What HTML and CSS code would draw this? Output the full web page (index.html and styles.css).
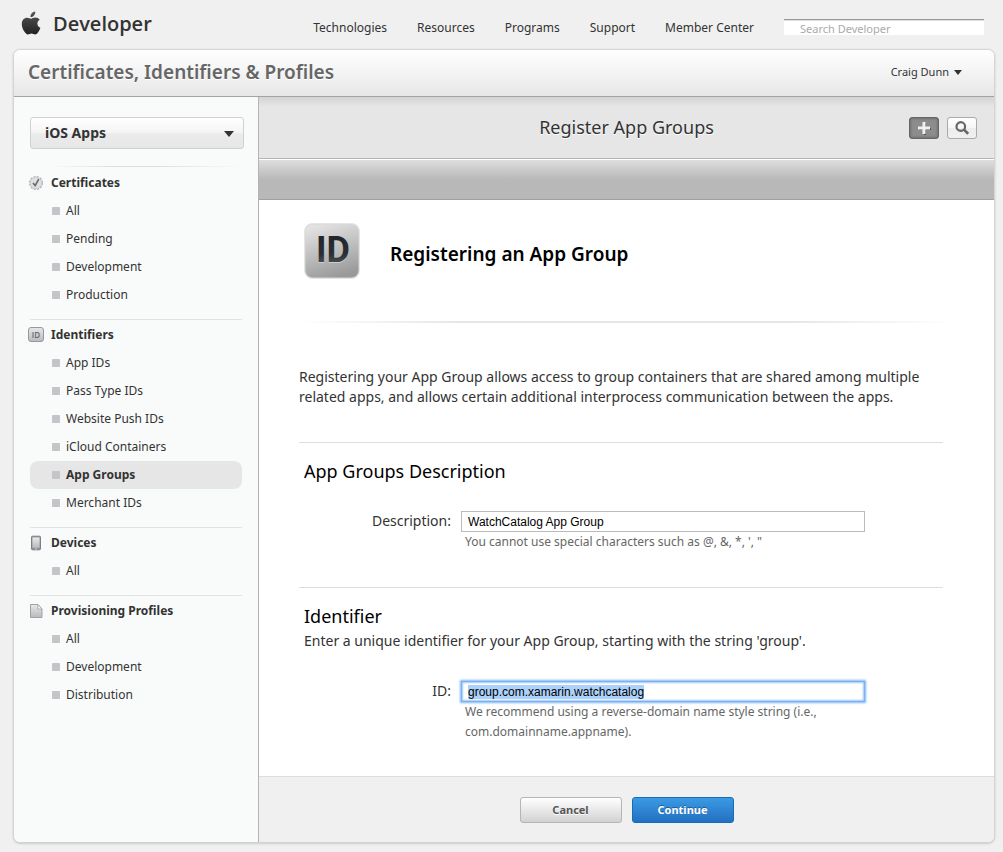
FILE: index.html
```html
<!DOCTYPE html>
<html lang="en">
<head>
<meta charset="utf-8">
<meta name="viewport" content="width=device-width, initial-scale=1">
<title>Register App Groups - Developer</title>
<link rel="stylesheet" href="styles.css">
</head>
<body>
<header class="site-header">
  <a class="brand" href="#">
    <svg class="brand-mark" viewBox="0 0 20 24" width="20" height="24" aria-hidden="true">
      <defs><linearGradient id="mark" x1="0" y1="0" x2="0" y2="1"><stop offset="0" stop-color="#555"/><stop offset="1" stop-color="#222"/></linearGradient></defs>
      <path fill="url(#mark)" d="M14.3 0.6c.2 1.500-.4 2.900-1.300 3.900-.9 1-2.200 1.700-3.500 1.600-.2-1.400.5-2.900 1.300-3.800C11.700 1.300 13.100.7 14.300.6zM18.700 8.700c-1.500.9-2.300 2.200-2.300 3.900 0 2 1.200 3.600 3 4.300-.5 1.500-1.200 2.800-2.100 4-.9 1.300-1.800 2.500-3.200 2.500s-1.900-.8-3.600-.8-2.200.8-3.600.8c-1.300 0-2.400-1.200-3.400-2.600C1.800 18.500.8 15.600.8 12.900c0-4 2.600-6.200 5.200-6.200 1.700 0 3 1 4 1s2.500-1.100 4.400-1.100c1.700 0 3.300.8 4.300 2.100z"/>
    </svg>
    <span>Developer</span>
  </a>
  <nav class="site-nav" aria-label="Site">
    <a href="#">Technologies</a>
    <a href="#">Resources</a>
    <a href="#">Programs</a>
    <a href="#">Support</a>
    <a href="#">Member Center</a>
  </nav>
  <input class="site-search" type="search" placeholder="Search Developer" aria-label="Search Developer">
</header>

<div class="panel">
  <div class="titlebar">
    <h1>Certificates, Identifiers &amp; Profiles</h1>
    <button class="account" type="button">Craig Dunn
      <svg viewBox="0 0 8 5" width="8" height="5" aria-hidden="true"><path fill="#333" d="M0 0h8L4 5z"/></svg>
    </button>
  </div>

  <div class="columns">
    <aside class="sidebar">
      <div class="platform">
        <select aria-label="Platform"><option>iOS Apps</option></select>
        <svg viewBox="0 0 10 6" width="10" height="6" aria-hidden="true"><path fill="#333" d="M0 0h10L5 6z"/></svg>
      </div>

      <section class="group group-first">
        <h2>
          <svg viewBox="0 0 16 16" width="16" height="16" aria-hidden="true">
            <circle cx="8" cy="8" r="6.300" fill="#d6d7d9" stroke="#b4b5b8" stroke-width="1.600" stroke-dasharray="2 1.300"/>
            <circle cx="8" cy="8" r="5.700" fill="#dfe0e1" stroke="#c6c7c9" stroke-width=".6"/>
            <path d="M5 8l2.200 2.600 3.500-6.400" fill="none" stroke="#66686c" stroke-width="1.600"/>
          </svg>
          Certificates
        </h2>
        <ul>
          <li><a href="#">All</a></li>
          <li><a href="#">Pending</a></li>
          <li><a href="#">Development</a></li>
          <li><a href="#">Production</a></li>
        </ul>
      </section>

      <section class="group">
        <h2>
          <svg viewBox="0 0 16 16" width="16" height="16" aria-hidden="true">
            <defs><linearGradient id="chip" x1="0" y1="0" x2="0" y2="1"><stop offset="0" stop-color="#e8e8ea"/><stop offset="1" stop-color="#b9babd"/></linearGradient></defs>
            <rect x=".5" y=".5" width="15" height="14" rx="2.500" fill="url(#chip)" stroke="#98999d"/>
            <text x="8" y="11" class="chip-text" text-anchor="middle">ID</text>
          </svg>
          Identifiers
        </h2>
        <ul>
          <li><a href="#">App IDs</a></li>
          <li><a href="#">Pass Type IDs</a></li>
          <li><a href="#">Website Push IDs</a></li>
          <li><a href="#">iCloud Containers</a></li>
          <li><a class="current" href="#" aria-current="page">App Groups</a></li>
          <li><a href="#">Merchant IDs</a></li>
        </ul>
      </section>

      <section class="group">
        <h2>
          <svg viewBox="0 0 16 16" width="16" height="16" aria-hidden="true">
            <rect x="3.500" y="1.200" width="9" height="13.600" rx="1" fill="#8d8f95" stroke="#7d7f85"/>
            <rect x="4.400" y="2.400" width="7.200" height="10.400" fill="url(#chip)"/>
            <path d="M7 14h2" stroke="#ddd" stroke-width=".8"/>
          </svg>
          Devices
        </h2>
        <ul>
          <li><a href="#">All</a></li>
        </ul>
      </section>

      <section class="group">
        <h2>
          <svg viewBox="0 0 16 16" width="16" height="16" aria-hidden="true">
            <path d="M2.500 1.500h7.500l4 4.500v8.500H2.500z" fill="url(#chip)" stroke="#a0a1a5"/>
            <path d="M9.800 1.500v4.500h4.200z" fill="#fafafa" stroke="#a0a1a5" stroke-width=".8"/>
          </svg>
          Provisioning Profiles
        </h2>
        <ul>
          <li><a href="#">All</a></li>
          <li><a href="#">Development</a></li>
          <li><a href="#">Distribution</a></li>
        </ul>
      </section>
    </aside>

    <main class="main">
      <div class="toolbar">
        <h2>Register App Groups</h2>
        <div class="tools">
          <button class="tool tool-on" type="button" aria-label="Add">
            <svg viewBox="0 0 14 14" width="14" height="14" aria-hidden="true"><path d="M8 2v12M2 8h12" stroke="#555" stroke-width="2"/><path d="M7 1v12M1 7h12" stroke="#f2f2f2" stroke-width="3"/></svg>
          </button>
          <button class="tool" type="button" aria-label="Search">
            <svg viewBox="0 0 14 14" width="14" height="14" aria-hidden="true"><circle cx="5.800" cy="5.500" r="4.300" fill="none" stroke="#666" stroke-width="2.200"/><path d="M8.700 8.400l4.500 4.500" stroke="#666" stroke-width="2.600"/></svg>
          </button>
        </div>
      </div>
      <div class="band"></div>

      <form class="form" onsubmit="return false">
        <div class="content">
          <div class="hero">
            <svg viewBox="0 0 56 56" width="56" height="56" aria-hidden="true">
              <defs>
                <linearGradient id="tile" x1=".3" y1="0" x2=".6" y2="1"><stop offset="0" stop-color="#e2e2e2"/><stop offset="1" stop-color="#999"/></linearGradient>
                <linearGradient id="ink" x1="0" y1="0" x2="0" y2="1"><stop offset="0" stop-color="#1f2327"/><stop offset=".6" stop-color="#2b2f33"/><stop offset="1" stop-color="#666a6e"/></linearGradient>
              </defs>
              <rect x=".5" y=".5" width="55" height="55" rx="8" fill="#d8d8d8" stroke="#e4e4e4"/>
              <rect x="1.500" y="1.500" width="53" height="53" rx="7" fill="url(#tile)"/>
              <text x="29" y="40" class="tile-text tile-shine" text-anchor="middle">ID</text>
              <text x="29" y="39" class="tile-text" fill="url(#ink)" text-anchor="middle">ID</text>
            </svg>
            <h3>Registering an App Group</h3>
          </div>
          <p class="intro">Registering your App Group allows access to group containers that are shared among multiple related apps, and allows certain additional interprocess communication between the apps.</p>

          <section class="block">
            <h4>App Groups Description</h4>
            <div class="field">
              <label for="description">Description:</label>
              <div class="control">
                <input id="description" type="text" value="WatchCatalog App Group" aria-describedby="description-help">
                <p id="description-help">You cannot use special characters such as @, &amp;, *, ', "</p>
              </div>
            </div>
          </section>

          <section class="block">
            <h4>Identifier</h4>
            <p class="lead">Enter a unique identifier for your App Group, starting with the string 'group'.</p>
            <div class="field">
              <label for="identifier">ID:</label>
              <div class="control">
                <input id="identifier" class="focused" type="text" value="group.com.xamarin.watchcatalog" aria-describedby="identifier-help" autofocus>
                <p id="identifier-help">We recommend using a reverse-domain name style string (i.e., com.domainname.appname).</p>
              </div>
            </div>
          </section>
        </div>
        <div class="actions">
          <button class="button" type="button">Cancel</button>
          <button class="button button-primary" type="submit">Continue</button>
        </div>
      </form>
    </main>
  </div>
</div>
<script src="main.js"></script>
</body>
</html>
```
FILE: styles.css
```css
* { box-sizing: border-box; }

body {
  margin: 0;
  padding: 0 9px 9px 14px;
  background: #f0f0f0;
  color: #333;
  font: 12px/20px "Noto Sans", "Open Sans", sans-serif;
}

h1, h2, h3, h4, p, ul { margin: 0; padding: 0; }
ul { list-style: none; }
a { color: inherit; text-decoration: none; }
button, input, select { font: inherit; color: inherit; margin: 0; }
svg { display: block; flex: none; }

.site-header {
  display: flex;
  align-items: center;
  height: 50px;
  padding: 4px 10px 0 7px;
}

.brand {
  display: flex;
  align-items: center;
  gap: 12px;
  margin-right: auto;
  padding-bottom: 8px;
  font: 600 20px/28px "Open Sans", sans-serif;
}

.brand span { padding-top: 2px; }

.site-nav {
  display: flex;
  gap: 30px;
  margin-right: 30px;
  padding-top: 2px;
}

.site-search {
  width: 200px;
  height: 16px;
  padding: 2px 16px 0;
  border: 0;
  border-top: 1px solid #999;
  border-radius: 0;
  outline: 0;
  background: #fff;
  box-shadow: inset 0 1px 0 #ddd;
  font-size: 11px;
  line-height: 14px;
  appearance: none;
}

.site-search::placeholder { color: #aaa; opacity: 1; }

.panel {
  border-radius: 6px;
  background: #fff;
  box-shadow: 0 0 1px 1px #d4d4d4, 0 1px 3px #aaa;
}

.titlebar {
  display: flex;
  align-items: center;
  justify-content: space-between;
  height: 47px;
  padding: 0 32px 2px 14px;
  border-bottom: 1px solid #a3a3a3;
  border-radius: 6px 6px 0 0;
  background: linear-gradient(#fff, #e7e7e7);
}

.titlebar h1 {
  color: #666;
  font-size: 19px;
  font-weight: 600;
  line-height: 24px;
  text-shadow: 0 1px 0 #fff;
}

.account {
  display: flex;
  align-items: center;
  gap: 5px;
  padding: 0;
  border: 0;
  background: none;
  font-size: 11px;
}

.columns { display: flex; }

.sidebar {
  flex: none;
  width: 245px;
  padding: 20px 14px 0 16px;
  border-right: 1px solid #b4b4b4;
  border-radius: 0 0 0 6px;
  background: #f9fbfa;
}

.platform { position: relative; }

.platform select {
  display: block;
  width: 100%;
  height: 32px;
  padding: 0 30px 0 14px;
  border: 1px solid #d0d0d0;
  border-radius: 3px;
  background: linear-gradient(#fff, #f4f4f4 50%, #ececec 50%, #e6e6e6);
  font-size: 14px;
  font-weight: 700;
  appearance: none;
}

.platform svg {
  position: absolute;
  top: 14px;
  right: 10px;
  pointer-events: none;
}

.group {
  margin: 10px 2px 0 0;
  border-top: 1px solid #e0e2e1;
}

.group-first {
  margin-top: 17px;
  border-image: linear-gradient(90deg, transparent 10%, #ddd 40%, #ddd 60%, transparent) 1;
}

.group h2 {
  display: flex;
  align-items: center;
  gap: 7px;
  height: 30px;
  padding-top: 1px;
  margin-left: -2px;
  font-size: 12px;
  font-weight: 700;
}

.group + .group h2 {
  height: 29px;
}

.chip-text {
  fill: #66686c;
  font: 600 8px "Open Sans", sans-serif;
}

.group a {
  display: flex;
  align-items: center;
  gap: 6px;
  height: 28px;
  padding-left: 22px;
  border-radius: 8px;
}

.group a::before {
  content: "";
  width: 8px;
  height: 8px;
  border-radius: 1px;
  background: #c4c5c8;
}

.group .current {
  background: #e6e6e6;
  font-weight: 700;
}

.main {
  flex: 1;
  min-width: 0;
}

.toolbar {
  display: grid;
  grid-template-columns: 1fr auto 1fr;
  align-items: center;
  height: 62px;
  padding: 0 17px;
  border-bottom: 1px solid #b5b5b5;
  background: linear-gradient(#d4d4d4, #e6e6e6 10px);
}

.toolbar h2 {
  grid-column: 2;
  padding-bottom: 2px;
  font-size: 18px;
  font-weight: 400;
  line-height: 24px;
  text-shadow: 0 1px 0 #fff;
}

.tools {
  display: flex;
  justify-content: flex-end;
  gap: 8px;
}

.tool {
  display: grid;
  place-items: center;
  width: 30px;
  height: 22px;
  padding: 0;
  border: 1px solid #aaa;
  border-radius: 3px;
  background: linear-gradient(#fff, #f6f6f6 50%, #ececec 50%, #f0f0f0);
}

.tool-on {
  border-color: #666;
  background: #8c8c8c;
  box-shadow: inset 0 0 3px #555;
}

.band {
  height: 41px;
  border-top: 1px solid #fff;
  border-bottom: 1px solid #a0a0a0;
  background: linear-gradient(#dedede, #b8b8b8 50%);
}

.content { padding: 23px 51px 34px 40px; }

.hero {
  display: flex;
  align-items: center;
  gap: 30px;
  margin-right: -10px;
  padding: 0 5px 42px;
  border-bottom: 2px solid;
  border-image: linear-gradient(90deg, transparent, #e6e6e6 25%, #e6e6e6 75%, transparent) 1;
}

.hero h3 {
  padding-top: 6px;
  color: #000;
  font-size: 19px;
  font-weight: 600;
  line-height: 24px;
}

.tile-text {
  font: 700 36px Roboto, sans-serif;
}

.tile-shine { fill: #ccc; }

.intro {
  margin: 44px 0 35px;
  font-size: 14px;
}

.block {
  padding-top: 15px;
  border-top: 1px solid #ddd;
}

.block + .block { margin-top: 35px; }

.block h4 {
  padding-left: 5px;
  color: #000;
  font-size: 18px;
  font-weight: 400;
  line-height: 26px;
}

.lead {
  padding: 2px 0 0 5px;
  font-size: 14px;
}

.field {
  display: grid;
  grid-template-columns: 152px minmax(0, 404px);
  column-gap: 10px;
  margin-top: 27px;
}

.lead + .field { margin-top: 30px; }

.field label {
  font-size: 14px;
  text-align: right;
}

.control input {
  display: block;
  width: 100%;
  height: 21px;
  padding: 1px 6px 0;
  border: 1px solid #bbb;
  outline: 0;
  background: #fff;
  color: #000;
  font: 12px/14px "Liberation Sans", Arial, sans-serif;
}

.control .focused {
  border-color: #7ab1ee;
  box-shadow: 0 0 2px 1px #7db5f3, inset 0 0 2px 1px #9cc8f7;
}

.control input::selection {
  background: #acd1fb;
  color: #000;
}

.control p {
  padding-left: 4px;
  color: #666;
}

.actions {
  display: flex;
  justify-content: center;
  gap: 10px;
  padding: 20px 0 19px;
  border-top: 1px solid #ddd;
  border-radius: 0 0 6px 0;
  background: #f0f0f0;
}

.button {
  width: 102px;
  height: 26px;
  padding: 0;
  border: 1px solid #b5b5b5;
  border-radius: 3px;
  background: linear-gradient(#fff, #d2d2d2);
  color: #555;
  font-size: 11px;
  font-weight: 700;
  text-shadow: 0 1px 0 #fff;
}

.button-primary {
  border-color: #0f6fb8;
  background: linear-gradient(#3b9ae4, #2470c2);
  color: #fff;
  text-shadow: 0 -1px 0 #1c5c9c;
}
```
FILE: main.js
```js
const identifier = document.getElementById("identifier");
identifier.focus();
identifier.select();
```
